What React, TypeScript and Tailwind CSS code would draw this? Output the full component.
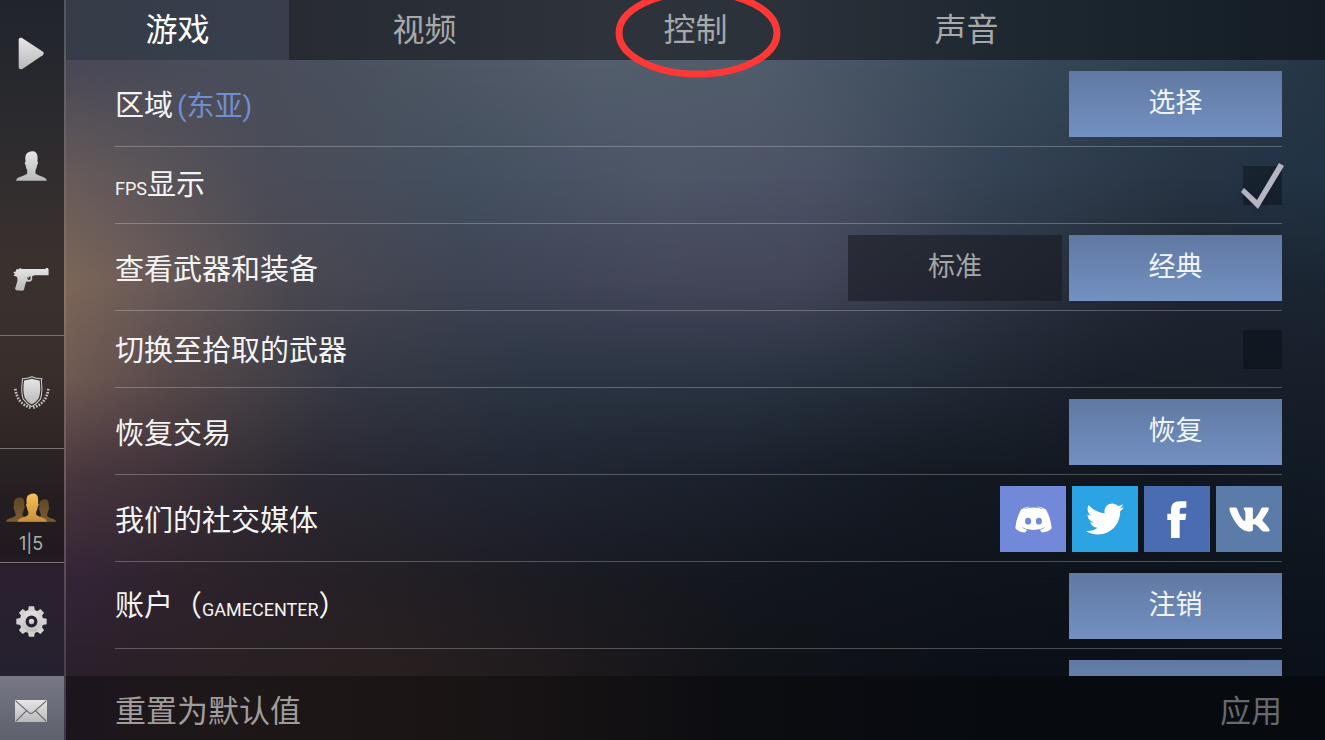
import { useState } from "react";
import type { ReactNode } from "react";
import { FaTwitter, FaVk } from "react-icons/fa";

const bustPath =
  "M0 90Q2 80 12 78Q28 74 34 68V58Q30 52 29 42Q26 40 27 34L29 32Q25 8 38 3Q46 -1 56 1Q68 6 65 32L67 34Q67 40 64 42Q63 52 59 58V68Q66 74 82 78Q92 81 94 90Z";

function IconDefs() {
  return (
    <svg className="absolute w-0 h-0" aria-hidden="true">
      <defs>
        <linearGradient id="silver" x1="0" y1="0" x2="0" y2="1">
          <stop offset="0" stopColor="#e6e6e6" />
          <stop offset="1" stopColor="#b9b9b9" />
        </linearGradient>
        <linearGradient id="gold" x1="0" y1="0" x2="0" y2="1">
          <stop offset="0" stopColor="#fbbf55" />
          <stop offset="1" stopColor="#c4913c" />
        </linearGradient>
        <linearGradient id="bronze" x1="0" y1="0" x2="0" y2="1">
          <stop offset="0" stopColor="#5e4728" />
          <stop offset="1" stopColor="#7c5c30" />
        </linearGradient>
      </defs>
    </svg>
  );
}

function PlayIcon() {
  return (
    <svg width="26" height="33" viewBox="0 0 78 98">
      <path d="M2 8Q2 0 11 2L74 43Q80 48 74 54L12 96Q2 98 2 90Z" fill="url(#silver)" />
    </svg>
  );
}

function ProfileIcon() {
  return (
    <svg width="31" height="30" viewBox="0 0 94 90">
      <path d={bustPath} fill="url(#silver)" />
    </svg>
  );
}

function PistolIcon() {
  return (
    <svg width="36" height="23" viewBox="0 0 109 70">
      <path
        fillRule="evenodd"
        fill="url(#silver)"
        d="M0 13L8 11L10 4H18L20 1H24L26 3H98L101 0H106V3H108V22H66L58 25V36Q56 42 48 42L40 41L37 50L33 66L30 69L9 68L6 63L13 40L13 30L9 25L2 24L5 17ZM42 27L45 36H53V26L48 26L47 31Z"
      />
    </svg>
  );
}

function ShieldIcon() {
  return (
    <svg width="37" height="33" viewBox="0 0 110 98">
      <path d="M28 8Q44 8 56 2Q68 8 86 8L84 14Q89 42 82 68Q72 82 56 91Q40 82 30 68Q23 42 28 14Z" fill="none" stroke="#cfcfcf" strokeWidth="3" />
      <path d="M33 13Q46 12 56 8Q66 12 79 13Q84 42 77 65Q70 77 56 85Q42 77 35 65Q28 42 33 13Z" fill="url(#silver)" />
      <path d="M7 38Q12 82 52 94" fill="none" stroke="#c4c4c4" strokeWidth="8" strokeDasharray="5 4" />
      <path d="M105 38Q100 82 60 94" fill="none" stroke="#c4c4c4" strokeWidth="8" strokeDasharray="5 4" />
    </svg>
  );
}

function LobbyIcon() {
  return (
    <svg width="50" height="29" viewBox="0 0 150 86">
      <path d={bustPath} fill="url(#bronze)" transform="translate(0 13) scale(.84 .81)" />
      <path d={bustPath} fill="url(#bronze)" transform="translate(78 18) scale(.77 .755)" />
      <path d={bustPath} fill="url(#gold)" transform="translate(35 1) scale(.94)" />
    </svg>
  );
}

function GearIcon() {
  return (
    <svg width="31" height="31" viewBox="-47 -47 94 94">
      <g fill="url(#silver)">
        <path
          fillRule="evenodd"
          d="M-36 0A36 36 0 1 1 36 0A36 36 0 1 1 -36 0ZM-18 0A18 18 0 1 0 18 0A18 18 0 1 0 -18 0Z"
        />
        <circle r="8" />
      </g>
      {[0, 45, 90, 135, 180, 225, 270, 315].map((angle) => (
        <path key={angle} d="M-11 -30L-8 -46H8L11 -30Z" fill="#d2d2d2" transform={`rotate(${angle})`} />
      ))}
    </svg>
  );
}

function MailIcon() {
  return (
    <svg width="32" height="22" viewBox="0 0 94 64">
      <rect width="94" height="64" rx="2" fill="url(#silver)" />
      <path d="M2 2L41 37Q47 42 53 37L92 2M3 62L34 31M91 62L60 31" fill="none" stroke="#5d5e6a" strokeWidth="3" />
    </svg>
  );
}

function DiscordIcon() {
  return (
    <svg width="37" height="27" viewBox="0 0 110 80" fill="#fff">
      <path
        fillRule="evenodd"
        d="M18 10Q30 2 42 1L43 3Q32 5 24 10Q39 4 55 4Q71 4 86 10Q78 5 67 3L68 1Q80 2 92 10Q106 34 109 66Q100 77 80 79L74 71Q84 68 91 62Q74 71 55 71Q36 71 19 62Q26 68 36 71L30 79Q10 77 1 66Q4 34 18 10ZM39 35A9 10 0 1 0 39 55A9 10 0 1 0 39 35ZM71 35A9 10 0 1 0 71 55A9 10 0 1 0 71 35Z"
      />
    </svg>
  );
}

function FacebookIcon() {
  return (
    <svg width="20" height="37" viewBox="0 0 60 111" fill="#fff">
      <path d="M12 111V57H1V38H12V26Q12 1 38 1H58V20H46Q38 20 38 28V38H58L55 57H38V111Z" />
    </svg>
  );
}

type SideButtonProps = { label: string; className: string; children: ReactNode };

function SideButton({ label, className, children }: SideButtonProps) {
  return (
    <button type="button" aria-label={label} className={`flex w-full shrink-0 flex-col items-center justify-center pr-0.5 ${className}`}>
      {children}
    </button>
  );
}

function Sidebar() {
  return (
    <nav className="relative flex w-[66px] shrink-0 bg-linear-to-b from-[#505560] via-[#8a7265] via-40% to-[#40364a]">
      <div className="flex w-16 flex-col bg-[linear-gradient(#20242d,#2a2a2e_15%,#3a312e_35%,#392e2b_50%,#241d20_68%,#201a20_75%,#2c2030_77%,#25202f_91%)]">
        <SideButton label="Play" className="h-[110px] pb-1"><PlayIcon /></SideButton>
        <SideButton label="Profile" className="h-[113px] pb-0.5"><ProfileIcon /></SideButton>
        <SideButton label="Inventory" className="h-[113px] border-b border-[#77716f]"><PistolIcon /></SideButton>
        <SideButton label="Clan" className="h-[113px] border-b border-[#77716f]"><ShieldIcon /></SideButton>
        <SideButton label="Lobby" className="h-[114px] gap-3 border-b border-[#77716f] pt-9">
          <LobbyIcon />
          <span className="font-['Inter'] text-[18px] leading-5 font-normal text-[#adadad]">1|5</span>
        </SideButton>
        <SideButton label="Settings" className="h-[113px] pt-1"><GearIcon /></SideButton>
        <SideButton label="Mail" className="min-h-16 flex-1 bg-linear-to-b from-[#777885] to-[#5e606c] pt-1.5"><MailIcon /></SideButton>
      </div>
    </nav>
  );
}

const tabs = ["游戏", "视频", "控制", "声音"];

function Tabs() {
  const [active, setActive] = useState(tabs[0]);

  return (
    <div role="tablist" className="flex h-15 shrink-0 bg-black/45">
      {tabs.map((tab) => (
        <button
          key={tab}
          type="button"
          role="tab"
          aria-selected={tab === active}
          onClick={() => setActive(tab)}
          className={`relative text-[32px] leading-10 first:w-[223px] w-[271px] ${
            tab === active ? "bg-[#5a7088]/30 text-white" : "text-[#a6a8aa]"
          }`}
        >
          {tab}
          {tab === "控制" && (
            <svg className="pointer-events-none absolute -top-3 left-[55px] z-10" width="167" height="90" viewBox="0 0 167 90">
              <ellipse cx="83" cy="45" rx="79" ry="41" fill="none" stroke="#fd3836" strokeWidth="7" />
            </svg>
          )}
        </button>
      ))}
    </div>
  );
}

function Row({ label, children }: { label: ReactNode; children: ReactNode }) {
  return (
    <div className="flex shrink-0 items-center justify-between border-b border-white/25 pt-[11px] pb-[9px]">
      <div className="pt-1 text-[29px] leading-10 text-[#f4f4f5]">{label}</div>
      <div className="flex">{children}</div>
    </div>
  );
}

function ActionButton({ children }: { children?: ReactNode }) {
  return (
    <button type="button" className="h-[66px] w-[213px] bg-linear-to-b from-[#6079a2] to-[#7290c1] pb-0.5 text-[27px] text-[#f1f5fb]">
      {children}
    </button>
  );
}

function CheckRow({ id, label, defaultChecked }: { id: string; label: ReactNode; defaultChecked?: boolean }) {
  const [checked, setChecked] = useState(Boolean(defaultChecked));

  return (
    <div className="flex h-[77px] shrink-0 items-center justify-between border-b border-white/25">
      <label htmlFor={id} className="pt-1 text-[29px] leading-10 text-[#f4f4f5]">{label}</label>
      <div className="relative h-[39px] w-[39px]">
        <input
          id={id}
          type="checkbox"
          checked={checked}
          onChange={(e) => setChecked(e.target.checked)}
          className="block h-full w-full appearance-none bg-[#050a12]/40"
        />
        {checked && (
          <svg className="pointer-events-none absolute -top-1.5 -left-1 drop-shadow-md" width="48" height="52" viewBox="0 0 48 52">
            <path d="M40 3L45 6L19 49L2 32L5 28L18 40Z" fill="#b3b5c0" />
          </svg>
        )}
      </div>
    </div>
  );
}

const socials = [
  { name: "Discord", className: "bg-[#7289da]", icon: <DiscordIcon /> },
  { name: "Twitter", className: "bg-[#2ca4e3]", icon: <FaTwitter size={38} /> },
  { name: "Facebook", className: "bg-[#4a6cb0]", icon: <FacebookIcon /> },
  { name: "VK", className: "bg-[#5b7ba9]", icon: <FaVk size={43} /> },
];

// Each band is a horizontal gradient that fades in downwards over the one above it.
function Backdrop() {
  return (
    <div className="absolute inset-0 -z-10 overflow-hidden bg-[#10161f]">
      <div className="absolute inset-0 bg-[linear-gradient(90deg,#494856_5%,#49505d_25%,#535d6c_45%,#515c6b_57%,#3f4e5e_70%,#2e4252_85%,#263545)]" />
      <div className="absolute inset-0 bg-[linear-gradient(90deg,#685b5a_5%,#4b4c57_20%,#434f5f_35%,#4e5668_50%,#4b5265_62%,#344253_75%,#273444_90%,#213344)] mask-[linear-gradient(transparent_9%,black_24%)]" />
      <div className="absolute inset-0 bg-[linear-gradient(90deg,#7c6658_5%,#6c5c59_11%,#4a4850_22%,#3e4454_35%,#43475a_50%,#434659_60%,#2c3342_76%,#1e2530_90%,#1b2533)] mask-[linear-gradient(transparent_24%,black_38%)]" />
      <div className="absolute inset-0 bg-[linear-gradient(90deg,#705a53_5%,#57494a_13%,#363944_26%,#2c3543_40%,#2b3443_55%,#242d3a_68%,#1a212b_83%,#181f2a)] mask-[linear-gradient(transparent_38%,black_51%)]" />
      <div className="absolute inset-0 bg-[linear-gradient(90deg,#4a373e_5%,#3f3239_13%,#2b2932_23%,#212733_38%,#1b222d_55%,#141a22_70%,#111720_90%,#121b25)] mask-[linear-gradient(transparent_51%,black_64%)]" />
      <div className="absolute inset-0 bg-[linear-gradient(90deg,#342537_5%,#2e232c_14%,#252026_28%,#1b1b23_42%,#12161d_60%,#0e141b_80%,#0d151e)] mask-[linear-gradient(transparent_64%,black_78%)]" />
      <div className="absolute inset-0 bg-[linear-gradient(90deg,#2a1f2c_5%,#2a2124_16%,#291f1f_30%,#1f1a1c_43%,#111319_56%,#0b1017_75%,#0b1119)] mask-[linear-gradient(transparent_78%,black_92%)]" />
    </div>
  );
}

export default function App() {
  return (
    <div className="relative isolate flex h-screen min-h-[740px] w-full overflow-hidden font-['Roboto','Noto_Sans_CJK_SC',sans-serif] font-normal text-white">
      <IconDefs />
      <Backdrop />
      <Sidebar />
      <main className="flex min-w-0 flex-1 flex-col">
        <Tabs />

        <section className="flex min-h-0 flex-1 flex-col overflow-hidden pr-[43px] pl-[49px]">
          <Row label={<>区域<span className="ml-1 text-[28px] text-[#708fd0]">(东亚)</span></>}>
            <ActionButton>选择</ActionButton>
          </Row>
          <CheckRow id="fps" defaultChecked label={<><span className="text-[18px]">FPS</span>显示</>} />
          <Row label="查看武器和装备">
            <button type="button" className="mr-[7px] h-[66px] w-[214px] bg-[#15181e]/55 pb-0.5 text-[27px] text-[#a3a5a8]">标准</button>
            <ActionButton>经典</ActionButton>
          </Row>
          <CheckRow id="pickup" label="切换至拾取的武器" />
          <Row label="恢复交易">
            <ActionButton>恢复</ActionButton>
          </Row>
          <Row label="我们的社交媒体">
            <div className="flex gap-1.5">
              {socials.map((s) => (
                <a key={s.name} href="#" aria-label={s.name} className={`flex h-[66px] w-[66px] items-center justify-center ${s.className}`}>
                  {s.icon}
                </a>
              ))}
            </div>
          </Row>
          <Row label={<>账户（<span className="text-[18px]">GAMECENTER</span>）</>}>
            <ActionButton>注销</ActionButton>
          </Row>
          <Row label="">
            <ActionButton />
          </Row>
        </section>

        <footer className="flex h-16 shrink-0 items-center justify-between bg-black/30 pr-[43px] pl-[49px] text-[31px] leading-10">
          <button type="button" className="pt-2 text-[#a09c9b]">重置为默认值</button>
          <button type="button" className="pt-2 text-[#66696d]">应用</button>
        </footer>
      </main>
    </div>
  );
}
